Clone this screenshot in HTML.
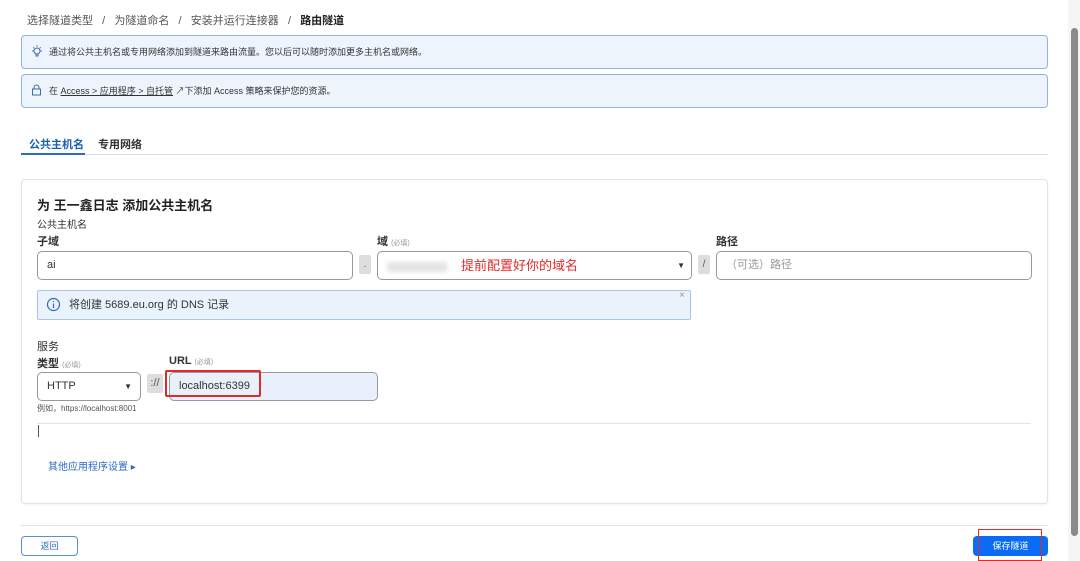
<!DOCTYPE html>
<html><head><meta charset="utf-8"><style>
*{box-sizing:border-box;margin:0;padding:0}
body{width:1080px;height:561px;background:#fff;font-family:"Liberation Sans","Noto Sans CJK SC",sans-serif;color:#333;position:relative;overflow:hidden;font-size:12px}
.a{position:absolute;white-space:nowrap}
.banner{position:absolute;left:21px;width:1027px;background:#eef4fc;border:1px solid #90b4dc;border-radius:4px;font-size:9px;color:#333;padding-left:27px}
.inp{position:absolute;border:1px solid #999;border-radius:5px;background:#fff;font-size:11px;padding-left:9px}
.sep{position:absolute;background:#ddd;border-radius:2px;color:#555;font-size:10px;text-align:center}
.req{font-size:7px;color:#999;font-weight:normal}
</style></head><body>
<div class="a" style="left:27px;top:12px;font-size:11px;color:#555">选择隧道类型 &nbsp;&nbsp;/ &nbsp;&nbsp;为隧道命名 &nbsp;&nbsp;/ &nbsp;&nbsp;安装并运行连接器 &nbsp;&nbsp;/ &nbsp;&nbsp;<b style="color:#222">路由隧道</b></div>
<div class="banner" style="top:35px;height:34px;line-height:32px">通过将公共主机名或专用网络添加到隧道来路由流量。您以后可以随时添加更多主机名或网络。</div>
<svg class="a" style="left:30px;top:44px" width="14" height="14" viewBox="0 0 14 14" fill="none" stroke="#3d6ea8" stroke-width="1"><circle cx="7" cy="7" r="3"/><path d="M6 10v2h2v-2M7 1v1.5M2 7h1.5M12 7h-1.5M3.3 3.3l1 1M10.7 3.3l-1 1"/></svg>
<div class="banner" style="top:74px;height:34px;line-height:32px">在 <u>Access &gt; 应用程序 &gt; 自托管</u> ↗下添加 Access 策略来保护您的资源。</div>
<svg class="a" style="left:31px;top:84px" width="11" height="12" viewBox="0 0 11 12" fill="none" stroke="#3d6ea8" stroke-width="1"><rect x="1.5" y="5" width="8" height="6"/><path d="M3 5V3.5a2.5 2.5 0 015 0V5"/></svg>
<div class="a" style="left:29px;top:136px;font-size:11px;color:#1a5fb4;font-weight:bold">公共主机名</div>
<div class="a" style="left:98px;top:136px;font-size:11px;color:#333;font-weight:bold">专用网络</div>
<div class="a" style="left:21px;top:153px;width:64px;height:2px;background:#2d6bc0"></div>
<div class="a" style="left:85px;top:154px;width:963px;height:1px;background:#ddd"></div>
<div class="a" style="left:21px;top:179px;width:1027px;height:325px;border:1px solid #e2e2e2;border-radius:4px;box-shadow:0 1px 2px rgba(0,0,0,.06)"></div>
<div class="a" style="left:37px;top:195px;font-size:13px;font-weight:bold;color:#222">为 王一鑫日志 添加公共主机名</div>
<div class="a" style="left:37px;top:216px;font-size:10px">公共主机名</div>
<div class="a" style="left:37px;top:233px;font-size:11px;font-weight:bold">子域</div>
<div class="inp" style="left:37px;top:251px;width:316px;height:29px;line-height:27px">ai</div>
<div class="sep" style="left:359px;top:255px;width:12px;height:19px;line-height:19px">.</div>
<div class="a" style="left:377px;top:233px;font-size:11px;font-weight:bold">域 <span class="req">(必填)</span></div>
<div class="inp" style="left:377px;top:251px;width:315px;height:29px;line-height:27px"><span style="display:inline-block;width:60px;height:10px;background:#e4e4e4;filter:blur(2px);vertical-align:middle"></span><span style="color:#e02b2b;font-size:13px;margin-left:14px">提前配置好你的域名</span><span style="position:absolute;right:6px;font-size:8px">▼</span></div>
<div class="sep" style="left:698px;top:255px;width:12px;height:19px;line-height:19px">/</div>
<div class="a" style="left:716px;top:233px;font-size:11px;font-weight:bold">路径</div>
<div class="inp" style="left:716px;top:251px;width:316px;height:29px;line-height:27px;color:#999">（可选）路径</div>
<div class="a" style="left:37px;top:290px;width:654px;height:30px;background:#eaf2fc;border:1px solid #a8c6e8;border-radius:2px;font-size:11px;line-height:28px;padding-left:31px">将创建 5689.eu.org 的 DNS 记录<span style="position:absolute;right:5px;top:-9px;color:#999;font-size:10px">×</span></div>
<svg class="a" style="left:46px;top:297px" width="15" height="15" viewBox="0 0 15 15" fill="none" stroke="#2d6bc0" stroke-width="1.2"><circle cx="7.5" cy="7.5" r="6"/><path d="M7.5 6.5v4.5M7.5 4v1"/></svg>
<div class="a" style="left:37px;top:338px;font-size:11px">服务</div>
<div class="a" style="left:37px;top:355px;font-size:11px;font-weight:bold">类型 <span class="req">(必填)</span></div>
<div class="inp" style="left:37px;top:372px;width:104px;height:29px;line-height:27px;font-size:11px">HTTP<span style="position:absolute;right:8px;font-size:8px">▼</span></div>
<div class="a" style="left:37px;top:403px;font-size:8px;color:#555">例如，https://localhost:8001</div>
<div class="sep" style="left:147px;top:374px;width:16px;height:19px;line-height:19px;font-size:11px">://</div>
<div class="a" style="left:169px;top:355px;font-size:11px;font-weight:bold">URL <span class="req">(必填)</span></div>
<div class="inp" style="left:169px;top:372px;width:209px;height:29px;line-height:27px;background:#e9f0fc;font-size:11px">localhost:6399</div>
<div class="a" style="left:165px;top:370px;width:96px;height:27px;border:2px solid #e02b2b;border-radius:2px"></div>
<div class="a" style="left:37px;top:423px;width:994px;height:1px;background:#e4e4e4"></div>
<div class="a" style="left:38px;top:425px;width:1px;height:12px;background:#555"></div>
<div class="a" style="left:48px;top:458px;font-size:10px;color:#2d6bc0">其他应用程序设置 ▸</div>
<div class="a" style="left:21px;top:525px;width:1027px;height:1px;background:#e2e2e2"></div>
<div class="a" style="left:21px;top:536px;width:57px;height:20px;border:1px solid #5b8fd0;border-radius:4px;font-size:9px;color:#2d6bc0;text-align:center;line-height:18px">返回</div>
<div class="a" style="left:973px;top:536px;width:75px;height:20px;background:#0a6cf5;border-radius:4px;font-size:9px;color:#fff;text-align:center;line-height:20px">保存隧道</div>
<div class="a" style="left:978px;top:529px;width:64px;height:32px;border:1.5px solid #e02b2b"></div>
<div class="a" style="left:1068px;top:0;width:12px;height:561px;background:#f5f5f5"></div>
<div class="a" style="left:1071px;top:28px;width:7px;height:508px;background:#8a8a8a;border-radius:4px"></div>
</body></html>
